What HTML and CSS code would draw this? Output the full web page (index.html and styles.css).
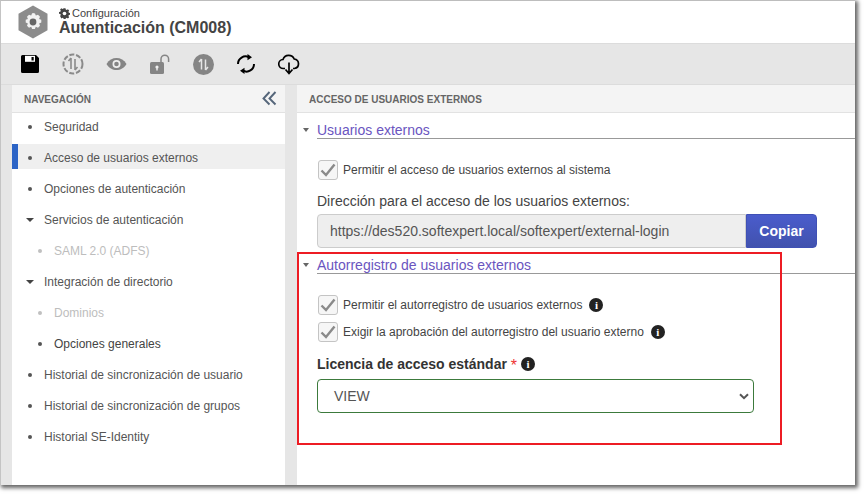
FILE: index.html
```html
<!DOCTYPE html>
<html lang="es">
<head>
<meta charset="utf-8">
<title>Autenticación (CM008)</title>
<link rel="stylesheet" href="styles.css">
</head>
<body>
<div class="window">
  <header class="header">
    <svg class="logo" width="32" height="34" viewBox="0 0 32 34"><path d="M16 0.5 30.5 8.7V25.3L16 33.5 1.5 25.3V8.7Z" fill="#8c8c8c"/><path d="M16 8l2 .4.8 2.2 2.2-.9 2 2-.9 2.200 2.200.9v2.800l-2.200.9.9 2.200-2 2-2.200-.9-.9 2.200h-2.800l-.9-2.200-2.200.9-2-2 .9-2.200-2.200-.9v-2.800l2.200-.9-.9-2.200 2-2 2.200.9.8-2.200z" fill="#f2f2f2"/><circle cx="16" cy="17" r="3.400" fill="#666"/></svg>
    <div class="titles">
      <div class="crumb"><svg width="11" height="11" viewBox="0 0 12 12"><path d="M6 .5l1 .1.300 1.500 1.100.5 1.300-.8 1.400 1.400-.8 1.300.5 1.100 1.500.3v2l-1.500.300-.5 1.100.8 1.300-1.400 1.400-1.300-.8-1.100.5-.3 1.500h-2l-.3-1.500-1.100-.5-1.300.8L.9 9.400l.8-1.300-.5-1.100L-.3 6.700v-2l1.500-.3.500-1.100-.8-1.300L2.300.6l1.300.8 1.100-.5L5 .5z" fill="#444" transform="translate(.3 -.3) scale(.97)"/><circle cx="6" cy="6" r="2" fill="#fff"/></svg><span>Configuración</span></div>
      <div class="title">Autenticación (CM008)</div>
    </div>
  </header>
  <div class="toolbar">
    <svg class="tool" width="20" height="20" viewBox="0 0 20 20"><path d="M1 2.500A1.500 1.500 0 0 1 2.500 1H16l3 3v13.500a1.500 1.500 0 0 1-1.500 1.500h-15A1.500 1.500 0 0 1 1 17.500Z" fill="#000"/><rect x="5" y="1.800" width="10" height="6" fill="#fff"/><rect x="11.500" y="3" width="2.200" height="3.500" fill="#000"/></svg>
    <svg class="tool" width="22" height="22" viewBox="0 0 22 22"><circle cx="11" cy="11" r="9.500" fill="none" stroke="#8a8a8a" stroke-width="2" stroke-dasharray="5 1.800"/><path d="M9 5v11M9 5 6.500 8M13 17V6M13 17l2.500-3" fill="none" stroke="#8a8a8a" stroke-width="1.600"/></svg>
    <svg class="tool" width="21" height="14" viewBox="0 0 21 14"><path d="M.5 7C3 2.800 6.500 1 10.500 1s7.500 1.800 10 6c-2.500 4.200-6 6-10 6S3 11.200.5 7Z" fill="#858585"/><circle cx="10.500" cy="7" r="4" fill="#f0f0f0"/><circle cx="10.500" cy="7" r="2.300" fill="#858585"/></svg>
    <svg class="tool" width="22" height="21" viewBox="0 0 22 21"><rect x="1" y="8" width="14" height="12" rx="1.500" fill="#858585"/><path d="M12 8V5a3.800 3.800 0 0 1 7.600 0v3" fill="none" stroke="#858585" stroke-width="1.500"/><circle cx="8" cy="13" r="1.600" fill="#f0f0f0"/><rect x="7.300" y="13" width="1.400" height="3.500" fill="#f0f0f0"/></svg>
    <svg class="tool" width="21" height="21" viewBox="0 0 21 21"><circle cx="10.500" cy="10.500" r="10.500" fill="#858585"/><path d="M8.500 5v10.500M8.500 5 6 8M12.500 16V5.500M12.500 16 15 13" fill="none" stroke="#e6e6e6" stroke-width="1.500"/></svg>
    <svg class="tool" width="20" height="22" viewBox="0 0 20 22"><path d="M2 11a7.500 7.500 0 0 1 11-6.700M18 11a7.500 7.500 0 0 1-11 6.700" fill="none" stroke="#000" stroke-width="2"/><path d="M11.500 1 16 4.300l-4.500 3ZM8.500 14.700 4 17.700 8.500 21Z" fill="#000"/></svg>
    <svg class="tool" width="22" height="21" viewBox="0 0 22 21"><path d="M7 14.500H5.500A4.500 4.500 0 0 1 5 5.500 6 6 0 0 1 16.200 5 4.800 4.800 0 0 1 16.500 14.500H15" fill="none" stroke="#000" stroke-width="1.700"/><path d="M11 8.500V19M7.500 15.500 11 19.500l3.500-4" fill="none" stroke="#000" stroke-width="1.700"/></svg>
  </div>
  <div class="panels">
    <aside class="panel nav">
      <div class="panel-head nav-head"><span>NAVEGACIÓN</span>
        <svg width="15" height="15" viewBox="0 0 15 15"><path d="M7.500 1 1.500 7.500l6 6M13.500 1l-6 6.500 6 6" fill="none" stroke="#55667a" stroke-width="1.900"/></svg>
      </div>
      <ul class="tree">
        <li class="item"><i class="dot"></i>Seguridad</li>
        <li class="item active"><i class="dot"></i>Acceso de usuarios externos</li>
        <li class="item"><i class="dot"></i>Opciones de autenticación</li>
        <li class="item"><i class="caret"></i>Servicios de autenticación</li>
        <li class="item sub off"><i class="dot"></i>SAML 2.0 (ADFS)</li>
        <li class="item"><i class="caret"></i>Integración de directorio</li>
        <li class="item sub off"><i class="dot"></i>Dominios</li>
        <li class="item sub"><i class="dot"></i>Opciones generales</li>
        <li class="item"><i class="dot"></i>Historial de sincronización de usuario</li>
        <li class="item"><i class="dot"></i>Historial de sincronización de grupos</li>
        <li class="item"><i class="dot"></i>Historial SE-Identity</li>
      </ul>
    </aside>
    <main class="panel content">
      <div class="panel-head"><span>ACCESO DE USUARIOS EXTERNOS</span></div>
      <section class="group">
        <h2 class="legend"><i class="mini-caret"></i><span class="legend-text">Usuarios externos</span></h2>
        <label class="check first"><span class="box"><svg width="16" height="14" viewBox="0 0 16 14"><path d="M1.500 7.500 6 12 14.500 1.500" fill="none" stroke="#8a8a8a" stroke-width="2.400"/></svg></span>Permitir el acceso de usuarios externos al sistema</label>
        <div class="field-label">Dirección para el acceso de los usuarios externos:</div>
        <div class="url-row">
          <div class="url">https://des520.softexpert.local/softexpert/external-login</div>
          <button class="copy">Copiar</button>
        </div>
      </section>
      <section class="group second">
        <h2 class="legend"><i class="mini-caret"></i><span class="legend-text">Autorregistro de usuarios externos</span></h2>
        <label class="check first2"><span class="box"><svg width="16" height="14" viewBox="0 0 16 14"><path d="M1.500 7.500 6 12 14.500 1.500" fill="none" stroke="#8a8a8a" stroke-width="2.400"/></svg></span>Permitir el autorregistro de usuarios externos<i class="info">i</i></label>
        <label class="check next"><span class="box"><svg width="16" height="14" viewBox="0 0 16 14"><path d="M1.500 7.500 6 12 14.500 1.500" fill="none" stroke="#8a8a8a" stroke-width="2.400"/></svg></span>Exigir la aprobación del autorregistro del usuario externo<i class="info">i</i></label>
        <div class="lic-label">Licencia de acceso estándar <span class="req">*</span><i class="info tight">i</i></div>
        <div class="select"><span>VIEW</span><svg width="10" height="7" viewBox="0 0 10 7"><path d="M1 1.200 5 5.200 9 1.200" fill="none" stroke="#555" stroke-width="2"/></svg></div>
      </section>
    </main>
  </div>
  <div class="highlight"></div>
</div>
</body>
</html>
```
FILE: styles.css
```css
* { box-sizing: border-box; }
html, body { margin: 0; padding: 0; background: #fff; overflow: hidden; }
body { width: 865px; height: 495px; font-family: "Liberation Sans", Arial, sans-serif; color: #444; }
.window {
  position: relative;
  width: 855px; height: 485px;
  display: flex; flex-direction: column;
  background: #e6e6e6;
  border-top: 1px solid #bdbdbd;
  border-left: 1px solid #c4c4c4;
  box-shadow: 2px 2px 4px 1px #666;
}
.header {
  height: 43px; flex: none;
  display: flex; align-items: center;
  padding-left: 16px;
  background: #fff;
  border-bottom: 1px solid #dcdcdc;
}
.logo { margin-right: 10px; flex: none; }
.titles { display: flex; flex-direction: column; margin-bottom: 1px; }
.crumb { display: flex; align-items: center; gap: 2px; font-size: 11px; line-height: 12px; color: #444; }
.title { margin-top: 1px; font-size: 16px; font-weight: bold; line-height: 16px; color: #444; }
.toolbar {
  height: 41px; flex: none;
  display: flex; align-items: center;
  padding-left: 19px;
  border-bottom: 1px solid #dcdcdc;
}
.tool { flex: none; margin-right: 22px; }
.panels { flex: 1; display: flex; gap: 12px; padding-left: 11px; min-height: 0; }
.panel { background: #fff; display: flex; flex-direction: column; }
.nav { width: 273px; flex: none; }
.content { flex: 1; min-width: 0; }
.panel-head {
  height: 28px; flex: none;
  display: flex; align-items: center; justify-content: space-between;
  padding: 0 12px;
  font-size: 10px; font-weight: bold;
  color: #666;
  background: #f4f4f4;
  border-bottom: 1px solid #e2e2e2;
}
.panel-head span { padding-top: 2px; }
.nav-head { padding-right: 8px; }
.tree { list-style: none; margin: 0; padding: 0; }
.item {
  position: relative;
  height: 25px; margin-bottom: 6px;
  display: flex; align-items: center;
  padding: 2px 0 0 32px;
  font-size: 12px; color: #555;
}
.item.active { background: #efefef; border-left: 6px solid #2c64c6; padding-left: 26px; }
.item.sub { padding-left: 42px; color: #444; }
.item.off { color: #bdbdbd; }
.dot { position: absolute; left: 16px; top: 12px; width: 4px; height: 4px; border-radius: 50%; background: #555; }
.active .dot { left: 10px; }
.sub .dot { left: 26px; }
.off .dot { background: #c0c0c0; }
.caret { position: absolute; left: 14px; top: 12px; width: 0; height: 0; border: 4px solid transparent; border-top: 4px solid #444; border-bottom: 0; }
.group { padding: 0 0 0 20px; }
.legend {
  position: relative; margin: 0; height: 26px;
  display: flex; align-items: flex-end;
  font-weight: normal; font-size: 14px; color: #6a55c0;
  border-bottom: 1px solid #999;
}
.legend-text { line-height: 15px; }
.mini-caret { position: absolute; left: -14px; top: 15px; width: 0; height: 0; border: 3.500px solid transparent; border-top: 4px solid #666; border-bottom: 0; }
.check { display: flex; align-items: center; font-size: 12px; color: #444; height: 20px; }
.first { margin-top: 21px; }
.first2 { margin-top: 21px; }
.next { margin-top: 7px; }
.box {
  width: 20px; height: 20px; flex: none;
  margin: 0 5px 0 1px;
  display: flex; align-items: center; justify-content: center;
  background: #f6f6f6; border: 1px solid #c4c4c4; border-radius: 3px;
}
.field-label { margin-top: 13px; font-size: 14px; line-height: 16px; color: #444; }
.url-row { display: flex; margin-top: 5px; width: 500px; }
.url {
  width: 429px; height: 34px;
  display: flex; align-items: center; padding-left: 12px;
  font-size: 14px; color: #555;
  background: #eee; border: 1px solid #ccc; border-radius: 4px 0 0 4px;
}
.copy {
  width: 71px; height: 34px; padding: 0;
  font: bold 14px "Liberation Sans", Arial, sans-serif; color: #fff;
  background: linear-gradient(#4a5ccc, #4152ae);
  border: 1px solid #3f50b5; border-radius: 0 4px 4px 0;
}
.second { margin-top: 0; }
.info {
  display: inline-flex; align-items: center; justify-content: center;
  width: 14px; height: 14px; margin-left: 7px;
  border-radius: 50%; background: #222; color: #fff;
  font: bold 11px/14px "Liberation Serif", serif;
}
.info.tight { margin-left: 4px; }
.lic-label { height: 16px; margin-top: 14px; font-size: 14px; font-weight: bold; line-height: 16px; color: #333; display: flex; align-items: center; white-space: pre; }
.req { color: #e33; font-size: 16px; font-weight: normal; padding-top: 4px; }
.select {
  width: 437px; height: 34px; margin-top: 7px;
  display: flex; align-items: center; justify-content: space-between;
  padding: 0 4px 0 16px;
  font-size: 14px; color: #555;
  background: #fff; border: 1px solid #3c7a3c; border-radius: 4px;
}
.highlight {
  position: absolute; left: 296px; top: 251px;
  width: 485px; height: 193px;
  border: 2px solid #ed1c24;
  pointer-events: none;
}
```
